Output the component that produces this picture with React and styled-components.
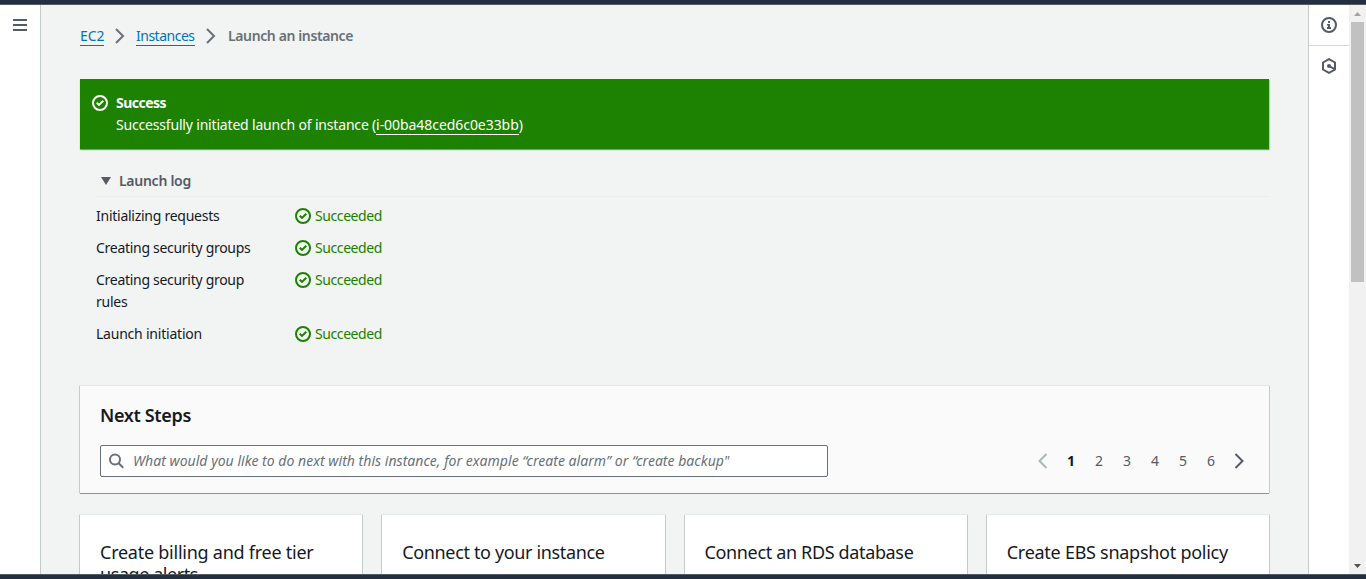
import React from 'react';
import styled, { createGlobalStyle } from 'styled-components';

const GlobalStyle = createGlobalStyle`
  *, *::before, *::after { box-sizing: border-box; }
  body {
    margin: 0;
    overflow: hidden;
    font-family: "Noto Sans", "Open Sans", sans-serif;
    font-size: 14px;
    line-height: 22px;
    color: #16191f;
    background: #f2f3f3;
  }
`;

const Page = styled.div`
  display: flex;
  flex-direction: column;
  height: 579px;
  width: 1366px;
  overflow: hidden;
`;

const TopBar = styled.header`
  flex: none;
  height: 5px;
  background: #232f3e;
  border-bottom: 1px solid #545b64;
`;

const BottomBar = styled.footer`
  flex: none;
  height: 5px;
  background: #232f3e;
  border-top: 1px solid #545b64;
`;

const Body = styled.div`
  flex: 1;
  display: flex;
  min-height: 0;
`;

const NavRail = styled.nav`
  flex: none;
  width: 41px;
  padding: 14px 0 0 13px;
  background: #fff;
  border-right: 1px solid #c3cbcb;
`;

const Burger = styled.svg`
  display: block;
`;

const Main = styled.main`
  flex: 1;
  min-width: 0;
  padding: 20px 39px 0;
  overflow: hidden;
`;

const ToolRail = styled.aside`
  flex: none;
  width: 41px;
  background: #fff;
  border-left: 1px solid #c3cbcb;
`;

const ToolButton = styled.div`
  height: ${(p) => (p.$divided ? 41 : 40)}px;
  display: flex;
  align-items: center;
  justify-content: center;
  border-bottom: ${(p) => (p.$divided ? '1px solid #d5dbdb' : 'none')};
`;

const ScrollTrack = styled.div`
  flex: none;
  width: 17px;
  display: flex;
  flex-direction: column;
  align-items: center;
  background: #f1f1f1;
`;

const ScrollArrow = styled.div`
  flex: none;
  height: 17px;
  width: 17px;
  display: flex;
  align-items: center;
  justify-content: center;
`;

const ScrollThumb = styled.div`
  flex: none;
  width: 13px;
  height: 260px;
  background: #c1c1c1;
`;

const ScrollSpace = styled.div`
  flex: 1;
`;

const Text = styled.span`
  white-space: nowrap;
  letter-spacing: ${(p) => p.$track || 0}px;
`;

const Breadcrumbs = styled.div`
  display: flex;
  align-items: center;
  height: 22px;
`;

const Crumb = styled(Text).attrs({ as: 'a' })`
  width: ${(p) => p.$width}px;
  height: 20px;
  line-height: 20px;
  color: #0073bb;
  border-bottom: 1px solid #0073bb;
`;

const CurrentCrumb = styled(Text)`
  font-weight: 600;
  color: #687078;
`;

const CrumbChevron = styled.svg`
  flex: none;
  margin: 0 ${(p) => p.$after}px 0 11px;
`;

const Flash = styled.section`
  display: flex;
  align-items: flex-start;
  height: 70px;
  margin-top: 32px;
  padding: 13px 12px;
  gap: 8px;
  color: #fff;
  background: #1d8102;
  box-shadow: 0 1px 1px rgba(0, 28, 36, 0.35), 1px 1px 1px rgba(0, 28, 36, 0.15);
`;

const FlashIcon = styled.div`
  padding-top: 3px;
  line-height: 0;
`;

const FlashLine = styled.div`
  display: flex;
  height: 22px;
  font-weight: ${(p) => (p.$strong ? 700 : 400)};
`;

const InstanceLink = styled(Text).attrs({ as: 'a' })`
  height: 21px;
  border-bottom: 1px solid #fff;
`;

const Log = styled.section`
  margin: 17px 1px 0 16px;
`;

const LogHeader = styled.div`
  display: flex;
  align-items: center;
  height: 31px;
  padding: 0 0 1px 5px;
  gap: 8px;
  font-weight: 600;
  color: #545b64;
  border-bottom: 1px solid #eaeded;
`;

const LogRow = styled.div`
  display: grid;
  grid-template-columns: 199px 1fr;
  padding-top: ${(p) => (p.$first ? 8 : 10)}px;
`;

const LogLabel = styled.div`
  display: flex;
  flex-direction: column;
`;

const Status = styled.div`
  display: flex;
  align-items: center;
  height: 22px;
  gap: 4px;
  color: #1d8102;
`;

const Panel = styled.section`
  height: 107px;
  margin-top: 41px;
  padding: 18px 20px 0;
  background: #fafafa;
  box-shadow: 0 1px 0 0 #879596, -1px 0 0 0 #c3cbcb, 1px 0 0 0 #c3cbcb, 0 0 0 1px #e6e9e9;
`;

const PanelTitle = styled.h2`
  margin: 0;
  font-size: 18px;
  line-height: 22px;
  font-weight: 600;
`;

const PanelTools = styled.div`
  display: flex;
  justify-content: space-between;
  align-items: center;
  margin: 19px -4px 0 0;
`;

const SearchBox = styled.div`
  display: flex;
  align-items: center;
  width: 728px;
  height: 32px;
  padding-left: 8px;
  gap: 8px;
  background: #fff;
  border: 1px solid #687078;
  border-radius: 2px;
  color: #687078;
  font-style: italic;
`;

const Pager = styled.div`
  display: flex;
  align-items: center;
`;

const PageItem = styled.div`
  width: 28px;
  height: 22px;
  display: flex;
  align-items: center;
  justify-content: center;
  font-weight: ${(p) => (p.$current ? 700 : 400)};
  color: ${(p) => (p.$current ? '#16191f' : '#545b64')};
`;

const Cards = styled.div`
  display: grid;
  grid-template-columns: repeat(4, 1fr);
  gap: 20px;
  margin-top: 22px;
`;

const Card = styled.article`
  display: flex;
  flex-direction: column;
  height: 220px;
  padding: 26px 20px;
  font-size: 18px;
  line-height: 22px;
  background: #fff;
  box-shadow: -1px 0 0 0 #c3cbcb, 1px 0 0 0 #c3cbcb, 0 0 0 1px #e6e9e9;
`;

const CheckIcon = () => (
  <svg width="16" height="16" viewBox="0 0 16 16" fill="none" stroke="currentColor" strokeWidth="2">
    <circle cx="8" cy="8" r="7" />
    <path d="M4.7 7.7 7 9.9 11.3 5.8" />
  </svg>
);

const Chevron = ({ left, color }) => (
  <svg width="10" height="16" viewBox="0 0 10 16" fill="none" stroke={color} strokeWidth="2">
    <path d={left ? 'M8.5 1 1.5 8l7 7' : 'M1.5 1l7 7-7 7'} />
  </svg>
);

const Separator = ({ after }) => (
  <CrumbChevron $after={after} width="10" height="16" viewBox="0 0 10 16" fill="none" stroke="#687078" strokeWidth="2">
    <path d="M1 1l7 7-7 7" />
  </CrumbChevron>
);

const logRows = [
  { lines: [['Initializing requests', -0.26]] },
  { lines: [['Creating security groups', -0.29]] },
  { lines: [['Creating security group', -0.29], ['rules', -0.25]] },
  { lines: [['Launch initiation', -0.22]] },
];

const cards = [
  [['Create billing and free tier', -0.25], ['usage alerts', -0.43]],
  [['Connect to your instance', -0.35]],
  [['Connect an RDS database', -0.35]],
  [['Create EBS snapshot policy', -0.27]],
];

export default function App() {
  return (
    <Page>
      <GlobalStyle />
      <TopBar />
      <Body>
        <NavRail>
          <Burger width="14" height="12" viewBox="0 0 14 12" fill="#545b64">
            <path d="M0 0h14v2H0zM0 5h14v2H0zM0 10h14v2H0z" />
          </Burger>
        </NavRail>
        <Main>
          <Breadcrumbs>
            <Crumb $width={24} $track={-0.1}>EC2</Crumb>
            <Separator after={11} />
            <Crumb $width={59} $track={-0.5}>Instances</Crumb>
            <Separator after={12} />
            <CurrentCrumb $track={-0.38}>Launch an instance</CurrentCrumb>
          </Breadcrumbs>

          <Flash>
            <FlashIcon><CheckIcon /></FlashIcon>
            <div>
              <FlashLine $strong><Text $track={-0.53}>Success</Text></FlashLine>
              <FlashLine>
                <Text $track={-0.18}>Successfully initiated launch of instance (</Text>
                <InstanceLink $track={-0.06}>i-00ba48ced6c0e33bb</InstanceLink>
                <Text>)</Text>
              </FlashLine>
            </div>
          </Flash>

          <Log>
            <LogHeader>
              <svg width="10" height="8" viewBox="0 0 10 8" fill="#545b64"><path d="M0 0h10L5 8z" /></svg>
              <Text $track={-0.27}>Launch log</Text>
            </LogHeader>
            {logRows.map((row, i) => (
              <LogRow key={i} $first={i === 0}>
                <LogLabel>
                  {row.lines.map(([text, track]) => <Text key={text} $track={track}>{text}</Text>)}
                </LogLabel>
                <Status><CheckIcon /><Text $track={-0.41}>Succeeded</Text></Status>
              </LogRow>
            ))}
          </Log>

          <Panel>
            <PanelTitle><Text $track={-0.34}>Next Steps</Text></PanelTitle>
            <PanelTools>
              <SearchBox>
                <svg width="16" height="16" viewBox="0 0 16 16" fill="none" stroke="#687078" strokeWidth="2">
                  <circle cx="6" cy="6.5" r="5" />
                  <path d="M9.7 10.2 14.2 14.7" />
                </svg>
                <Text $track={0.03}>What would you like to do next with this instance, for example “create alarm” or “create backup"</Text>
              </SearchBox>
              <Pager>
                <PageItem><Chevron left color="#aab7b8" /></PageItem>
                <PageItem $current>1</PageItem>
                {[2, 3, 4, 5, 6].map((n) => <PageItem key={n}>{n}</PageItem>)}
                <PageItem><Chevron color="#545b64" /></PageItem>
              </Pager>
            </PanelTools>
          </Panel>

          <Cards>
            {cards.map((lines) => (
              <Card key={lines[0][0]}>
                {lines.map(([text, track]) => <Text key={text} $track={track}>{text}</Text>)}
              </Card>
            ))}
          </Cards>
        </Main>
        <ToolRail>
          <ToolButton $divided>
            <svg width="16" height="16" viewBox="0 0 16 16" fill="none" stroke="#545b64" strokeWidth="2">
              <circle cx="8" cy="8" r="7" />
              <path d="M7 4h2v2H7zM6 7h3v3h1v2H6v-2h1V8.500H6z" fill="#545b64" stroke="none" />
            </svg>
          </ToolButton>
          <ToolButton>
            <svg width="16" height="16" viewBox="0 0 16 16" fill="none" stroke="#545b64" strokeWidth="2">
              <path d="M8 1.1 14 4.5v7L8 14.9 2 11.5v-7z" />
              <path d="M8 8l5.500 3.200" />
              <circle cx="8" cy="8" r="2" fill="#545b64" stroke="none" />
            </svg>
          </ToolButton>
        </ToolRail>
        <ScrollTrack>
          <ScrollArrow><svg width="7" height="4" viewBox="0 0 7 4" fill="#a3a3a3"><path d="M3.5 0 7 4H0z" /></svg></ScrollArrow>
          <ScrollThumb />
          <ScrollSpace />
          <ScrollArrow><svg width="7" height="4" viewBox="0 0 7 4" fill="#505050"><path d="M0 0h7L3.5 4z" /></svg></ScrollArrow>
        </ScrollTrack>
      </Body>
      <BottomBar />
    </Page>
  );
}
